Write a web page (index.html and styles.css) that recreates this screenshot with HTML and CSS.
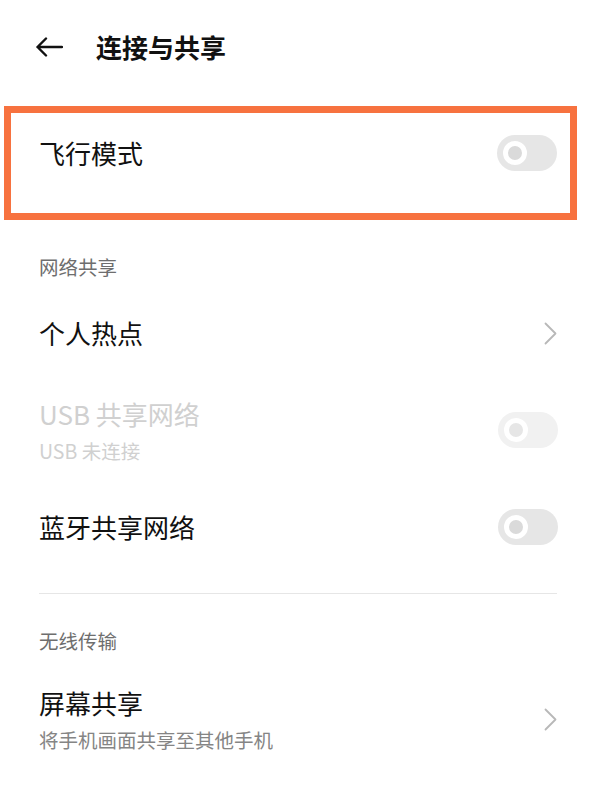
FILE: index.html
```html
<!DOCTYPE html>
<html lang="zh-CN">
  <head>
    <meta charset="UTF-8" />
    <meta name="viewport" content="width=device-width, initial-scale=1.0" />
    <title>连接与共享</title>
    <link rel="stylesheet" href="styles.css">
  </head>
  <body>
    <div class="header">
      <svg class="back" width="28" height="20" viewBox="0 0 28 20">
        <path d="M27 10H2.5M11 1.5L2.5 10L11 18.5" fill="none" stroke="#111" stroke-width="2.4" stroke-linecap="round" stroke-linejoin="round" />
      </svg>
      <h1>连接与共享</h1>
    </div>

    <div class="highlight">
      <div class="row row-top">
        <span class="title">飞行模式</span>
        <span class="switch"><span class="knob"></span></span>
      </div>
    </div>

    <div class="label label-first">网络共享</div>

    <div class="row row-single">
      <span class="title">个人热点</span>
      <svg class="chevron" width="13" height="23" viewBox="0 0 13 23">
        <path d="M1.5 1.5L11.5 11.5L1.5 21.5" fill="none" stroke="#b8b8b8" stroke-width="1.8" stroke-linecap="round" stroke-linejoin="round" />
      </svg>
    </div>

    <div class="row row-double disabled">
      <div class="texts">
        <span class="title">USB 共享网络</span>
        <span class="sub">USB 未连接</span>
      </div>
      <span class="switch"><span class="knob"></span></span>
    </div>

    <div class="row row-single">
      <span class="title">蓝牙共享网络</span>
      <span class="switch"><span class="knob"></span></span>
    </div>

    <div class="divider"></div>

    <div class="label">无线传输</div>

    <div class="row row-screen">
      <div class="texts">
        <span class="title">屏幕共享</span>
        <span class="sub">将手机画面共享至其他手机</span>
      </div>
      <svg class="chevron" width="13" height="23" viewBox="0 0 13 23">
        <path d="M1.5 1.5L11.5 11.5L1.5 21.5" fill="none" stroke="#b8b8b8" stroke-width="1.8" stroke-linecap="round" stroke-linejoin="round" />
      </svg>
    </div>
  </body>
</html>
```

FILE: styles.css
```css
* {
  margin: 0;
  padding: 0;
  box-sizing: border-box;
}

body {
  font-family: "Noto Sans CJK SC", "Noto Sans", sans-serif;
  background: #ffffff;
  color: #111111;
  width: 599px;
  overflow: hidden;
}

.header {
  height: 94px;
  display: flex;
  align-items: center;
  padding-left: 35px;
}

.back {
  margin-right: 33px;
}

.header h1 {
  font-size: 26px;
  font-weight: 700;
  line-height: 36px;
  color: #111111;
}

.highlight {
  margin: 12px 22px 0 4px;
  height: 114px;
  border: 7px solid #f7723f;
  padding: 0 13px 0 28px;
}

.row {
  display: flex;
  align-items: center;
  justify-content: space-between;
  padding: 0 41px 0 39px;
}

.highlight .row {
  padding: 0;
}

.row-top {
  height: 80px;
}

.row-single {
  height: 66px;
}

.row-double {
  height: 128px;
}

.row-screen {
  height: 70px;
}

.title {
  font-size: 26px;
  line-height: 36px;
  color: #111111;
}

.texts {
  display: flex;
  flex-direction: column;
  gap: 5px;
}

.sub {
  font-size: 19.5px;
  line-height: 28px;
  color: #858585;
}

.label {
  font-size: 19.5px;
  line-height: 28px;
  color: #6e6e6e;
  padding: 33px 0 29px 39px;
}

.label-first {
  padding-bottom: 19px;
}

.switch {
  position: relative;
  width: 60px;
  height: 36px;
  border-radius: 18px;
  background: #e6e6e6;
  flex-shrink: 0;
}

.knob {
  position: absolute;
  left: 6px;
  top: 6px;
  width: 24px;
  height: 24px;
  border-radius: 50%;
  border: 5.5px solid #ffffff;
  background: #dadada;
}

.chevron {
  margin-right: 1px;
}

.disabled .title,
.disabled .sub {
  color: #d0d0d0;
}

.disabled .switch {
  background: #f1f1f1;
}

.disabled .knob {
  background: #e6e6e6;
}

.divider {
  height: 1px;
  background: #e6e6e6;
  margin: 33px 42px 0 39px;
}
```
